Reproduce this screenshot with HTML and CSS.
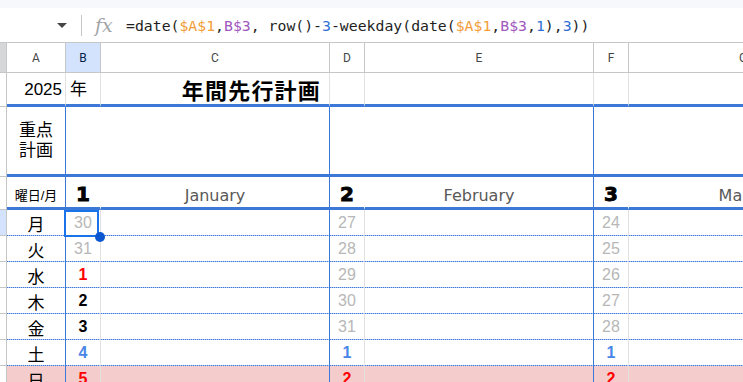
FILE: index.html
```html
<!DOCTYPE html>
<html lang="ja">
<head>
    <meta charset="UTF-8">
    <meta name="viewport" content="width=device-width, initial-scale=1.0">
    <title>年間先行計画</title>
    <link rel="stylesheet" href="styles.css">
</head>
<body>
    <div class="topband"></div>

    <div class="formula-bar">
        <div class="name-box"><span class="caret"></span></div>
        <div class="divider"></div>
        <div class="fx">fx</div>
        <div class="formula">=date(<span class="ref-a">$A$1</span>,<span class="ref-b">B$3</span>, row()-<span class="num">3</span>-weekday(date(<span class="ref-a">$A$1</span>,<span class="ref-b">B$3</span>,<span class="num">1</span>),<span class="num">3</span>))</div>
    </div>

    <div class="sheet">
        <!-- column letters -->
        <div class="row">
            <div class="corner"></div>
            <div class="col-head">A</div>
            <div class="col-head active">B</div>
            <div class="col-head">C</div>
            <div class="col-head">D</div>
            <div class="col-head">E</div>
            <div class="col-head">F</div>
            <div class="col-head">G</div>
        </div>

        <!-- row 1: year + title -->
        <div class="row thick">
            <div class="row-head"></div>
            <div class="cell year">2025</div>
            <div class="cell year-unit">年</div>
            <div class="cell title">年間先行計画</div>
            <div class="cell"></div>
            <div class="cell"></div>
            <div class="cell"></div>
            <div class="cell"></div>
        </div>

        <!-- row 2: focus plan -->
        <div class="row thick">
            <div class="row-head"></div>
            <div class="cell edge focus">重点<br>計画</div>
            <div class="cell edge span2"></div>
            <div class="cell edge span2"></div>
            <div class="cell span2"></div>
        </div>

        <!-- row 3: months -->
        <div class="row thick">
            <div class="row-head"></div>
            <div class="cell edge label">曜日/月</div>
            <div class="cell open month-no">1</div>
            <div class="cell edge month-name">January</div>
            <div class="cell open month-no">2</div>
            <div class="cell edge month-name">February</div>
            <div class="cell open month-no">3</div>
            <div class="cell month-name">March</div>
        </div>

        <!-- weeks -->
        <div class="row week">
            <div class="row-head active"></div>
            <div class="cell edge day">月</div>
            <div class="cell date muted selected">30</div>
            <div class="cell edge"></div>
            <div class="cell date muted">27</div>
            <div class="cell edge"></div>
            <div class="cell date muted">24</div>
            <div class="cell"></div>
        </div>
        <div class="row week">
            <div class="row-head"></div>
            <div class="cell edge day">火</div>
            <div class="cell date muted">31</div>
            <div class="cell edge"></div>
            <div class="cell date muted">28</div>
            <div class="cell edge"></div>
            <div class="cell date muted">25</div>
            <div class="cell"></div>
        </div>
        <div class="row week">
            <div class="row-head"></div>
            <div class="cell edge day">水</div>
            <div class="cell date red">1</div>
            <div class="cell edge"></div>
            <div class="cell date muted">29</div>
            <div class="cell edge"></div>
            <div class="cell date muted">26</div>
            <div class="cell"></div>
        </div>
        <div class="row week">
            <div class="row-head"></div>
            <div class="cell edge day">木</div>
            <div class="cell date cur">2</div>
            <div class="cell edge"></div>
            <div class="cell date muted">30</div>
            <div class="cell edge"></div>
            <div class="cell date muted">27</div>
            <div class="cell"></div>
        </div>
        <div class="row week">
            <div class="row-head"></div>
            <div class="cell edge day">金</div>
            <div class="cell date cur">3</div>
            <div class="cell edge"></div>
            <div class="cell date muted">31</div>
            <div class="cell edge"></div>
            <div class="cell date muted">28</div>
            <div class="cell"></div>
        </div>
        <div class="row week">
            <div class="row-head"></div>
            <div class="cell edge day">土</div>
            <div class="cell date blue">4</div>
            <div class="cell edge"></div>
            <div class="cell date blue">1</div>
            <div class="cell edge"></div>
            <div class="cell date blue">1</div>
            <div class="cell"></div>
        </div>
        <div class="row week sun">
            <div class="row-head"></div>
            <div class="cell edge day">日</div>
            <div class="cell date red">5</div>
            <div class="cell edge"></div>
            <div class="cell date red">2</div>
            <div class="cell edge"></div>
            <div class="cell date red">2</div>
            <div class="cell"></div>
        </div>
    </div>
</body>
</html>
```

FILE: styles.css
```css
* {
    box-sizing: border-box;
}

body {
    margin: 0;
    width: 743px;
    height: 382px;
    overflow: hidden;
    background-color: #FFFFFF;
    color: #000000;
    font-family: "Liberation Sans", "Noto Sans CJK JP", sans-serif;
}

/* toolbar edge + formula bar */

.topband {
    height: 8px;
    background-color: #F6F8FC;
}

.formula-bar {
    display: flex;
    align-items: center;
    height: 35px;
    border-bottom: 1px solid #C4C7C5;
}

.name-box {
    width: 81px;
    display: flex;
    justify-content: flex-end;
    padding-right: 14px;
}

.caret {
    border-left: 5px solid transparent;
    border-right: 5px solid transparent;
    border-top: 5px solid #444746;
}

.divider {
    width: 1px;
    height: 21px;
    background-color: #C4C7C5;
}

.fx {
    width: 44px;
    padding-left: 13px;
    font-family: "DejaVu Serif", serif;
    font-style: italic;
    font-size: 19px;
    color: #A2A5A8;
}

.formula {
    font-family: "DejaVu Sans Mono", monospace;
    font-size: 14.8px;
    color: #1F1F1F;
    white-space: nowrap;
}

.ref-a {
    color: #F29D38;
}

.ref-b {
    color: #A057BE;
}

.num {
    color: #2F6FD6;
}

/* grid */

.sheet {
    display: grid;
    grid-template-columns: 7px 59px 35px 229px 35px 229px 35px 229px;
    grid-template-rows: 30px 34px 70px 33px repeat(7, 26px);
    width: max-content;
}

.row {
    display: contents;
}

.corner {
    background-color: #D5D7D9;
    border-right: 1px solid #C4C7C5;
    border-bottom: 1px solid #C4C7C5;
}

.col-head {
    display: flex;
    align-items: center;
    justify-content: center;
    border-right: 1px solid #C4C7C5;
    border-bottom: 1px solid #C4C7C5;
    font-family: Roboto, sans-serif;
    font-size: 12px;
    color: #444746;
}

.col-head.active {
    background-color: #D3E3FD;
    color: #041E49;
}

.row-head {
    border-right: 1px solid #C4C7C5;
    border-bottom: 1px solid #C4C7C5;
}

.row-head.active {
    background-color: #D3E3FD;
}

.cell {
    display: flex;
    align-items: center;
    justify-content: center;
    border-right: 1px solid #E1E1E1;
    border-bottom: 1px solid #E1E1E1;
    white-space: nowrap;
    overflow: hidden;
}

.row.thick .cell {
    border-bottom: 3px solid #3C78D8;
}

/* dotted week separators, drawn as a 1px dot pattern */
.row.week .cell {
    border-bottom: 0;
    background: repeating-linear-gradient(to right, #3C78D8 0 1px, #A9C4F0 1px 2px) left bottom / 100% 1px no-repeat;
}

.row.sun .cell {
    background-color: #F4CCCC;
}

.cell.edge {
    border-right-color: #3C78D8;
}

.cell.open {
    border-right-color: transparent;
}

.span2 {
    grid-column: span 2;
}

/* row 1 */

.year {
    justify-content: flex-end;
    align-items: flex-end;
    padding: 0 3px 4px 0;
    font-size: 17px;
}

.year-unit {
    justify-content: flex-start;
    align-items: flex-end;
    padding: 0 0 4px 4px;
    font-size: 17px;
}

.title {
    justify-content: flex-end;
    padding-right: 8px;
    font-size: 22px;
    font-weight: bold;
    letter-spacing: 1.2px;
}

/* row 2 */

.focus {
    font-size: 17px;
    line-height: 20px;
    text-align: center;
}

/* row 3 */

.label {
    align-items: flex-end;
    padding-bottom: 3px;
    font-size: 13px;
}

.month-no {
    align-items: flex-end;
    padding-bottom: 1px;
    font-family: "DejaVu Sans", sans-serif;
    font-weight: bold;
    font-size: 20px;
    -webkit-text-stroke: 0.9px #000000;
}

.month-name {
    align-items: flex-end;
    padding-bottom: 2px;
    font-family: "DejaVu Sans", sans-serif;
    font-size: 16px;
    color: #595959;
}

/* weeks */

.day {
    font-size: 17px;
}

.date {
    font-size: 16px;
}

.muted {
    color: #B7B7B7;
}

.cur {
    font-weight: bold;
}

.red {
    font-weight: bold;
    color: #FF0000;
}

.blue {
    font-weight: bold;
    color: #4A86E8;
}

.selected {
    position: relative;
    overflow: visible;
}

.selected::before {
    content: "";
    position: absolute;
    left: -2px;
    top: 0;
    right: 1px;
    bottom: -1px;
    border: 2px solid #1A73E8;
    z-index: 1;
}

.selected::after {
    content: "";
    position: absolute;
    left: 29px;
    top: 22px;
    width: 10px;
    height: 10px;
    border-radius: 50%;
    background-color: #0B57D0;
    z-index: 2;
}
```
